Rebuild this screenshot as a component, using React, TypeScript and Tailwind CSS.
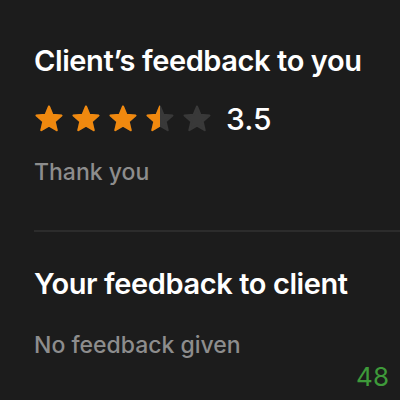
import React from 'react';

const STAR_PATH =
  'M12 17.27L18.18 21l-1.64-7.03L22 9.24l-7.19-.61L12 2 9.19 8.63 2 9.24l5.46 4.73L5.82 21z';

function Star({ fill, index }: { fill: number; index: number }) {
  const id = `star-clip-${index}`;
  return (
    <svg width="30" height="30" viewBox="0 0 24 24" className="shrink-0">
      <defs>
        <clipPath id={id}>
          <rect x="0" y="0" width={24 * fill} height="24" />
        </clipPath>
      </defs>
      <path d={STAR_PATH} fill="#393939" stroke="#393939" strokeWidth="1.6" strokeLinejoin="round" />
      {fill > 0 && (
        <path
          d={STAR_PATH}
          fill="#f0890f"
          stroke="#f0890f"
          strokeWidth="1.6"
          strokeLinejoin="round"
          clipPath={`url(#${id})`}
        />
      )}
    </svg>
  );
}

function Rating({ value }: { value: number }) {
  return (
    <div className="flex items-center">
      <div className="flex items-center gap-[7px]">
        {[0, 1, 2, 3, 4].map((i) => (
          <Star key={i} index={i} fill={Math.max(0, Math.min(1, value - i))} />
        ))}
      </div>
      <span className="ml-[14px] text-[30px] leading-none font-medium text-white">{value.toFixed(1)}</span>
    </div>
  );
}

export default function App() {
  return (
    <div
      className="relative h-[400px] w-[400px] overflow-hidden bg-[#1c1c1c]"
      style={{ fontFamily: 'Inter, "Liberation Sans", sans-serif' }}
    >
      <div className="px-[34px] pt-[43px]">
        <h2 className="text-[29px] leading-[36px] font-semibold tracking-[-0.4px] whitespace-nowrap text-white">
          Client’s feedback to you
        </h2>
        <div className="mt-[25px]">
          <Rating value={3.5} />
        </div>
        <p className="mt-[23px] text-[23px] leading-[30px] font-medium text-[#8d8d8d]">Thank you</p>
      </div>

      <div className="mt-[43px] ml-[34px] h-[2px] bg-[#2c2c2c]" />

      <div className="px-[34px] pt-[34px]">
        <h2 className="text-[29px] leading-[36px] font-semibold tracking-[-0.4px] whitespace-nowrap text-white">
          Your feedback to client
        </h2>
        <p className="mt-[28px] text-[23px] leading-[30px] font-medium text-[#8d8d8d]">No feedback given</p>
      </div>

      <span className="absolute right-[11px] bottom-[10px] text-[26px] leading-none text-[#3e9a3a]">48</span>
    </div>
  );
}
